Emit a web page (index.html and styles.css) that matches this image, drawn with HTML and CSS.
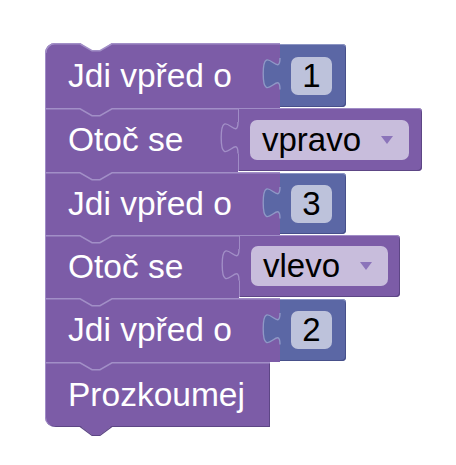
FILE: index.html
```html
<!DOCTYPE html>
<html>
<head>
<meta charset="utf-8">
<link rel="stylesheet" href="styles.css">
</head>
<body>
<div class="stack">
  <div class="row h65">
    <div class="stmt first w-jdi">
      <svg class="edge" height="10"><polygon class="dip" points="35,0 47,8 55,8 67,0"/><path class="hl" d="M0.75,10 A9.25,9.25 0 0 1 10,0.75 L35,0.75 L47,7.75 L55,7.75 L67,0.75 L1000,0.75"/></svg>
      <span class="label">Jdi vpřed o</span>
    </div>
    <div class="value blue">
      <svg class="tab" width="20" height="33"><path class="tab-fill" d="M18,0 C18,21 1.2,-16.8 1.2,15.75 S18,10.5 18,31.5 L20,31.5 L20,0 Z"/><path class="tab-hl" d="M18,0 C18,21 1.2,-16.8 1.2,15.75 S18,10.5 18,31.5"/></svg>
      <span class="field num">1</span>
    </div>
  </div>
  <div class="row h64">
    <div class="stmt w-oto">
      <svg class="edge" height="10"><polyline class="hl" points="0,0.75 35,0.75 47,7.75 55,7.75 67,0.75 1000,0.75"/></svg>
      <span class="label">Otoč se</span>
    </div>
    <div class="value purple w-vpravo">
      <svg class="tab" width="20" height="33"><path class="tab-fill" d="M18,0 C18,21 1.2,-16.8 1.2,15.75 S18,10.5 18,31.5 L20,31.5 L20,0 Z"/><path class="tab-hl" d="M18,0 C18,21 1.2,-16.8 1.2,15.75 S18,10.5 18,31.5"/></svg>
      <span class="field dd">vpravo<i class="arrow"></i></span>
    </div>
  </div>
  <div class="row h63">
    <div class="stmt w-jdi">
      <svg class="edge" height="10"><polyline class="hl" points="0,0.75 35,0.75 47,7.75 55,7.75 67,0.75 1000,0.75"/></svg>
      <span class="label">Jdi vpřed o</span>
    </div>
    <div class="value blue">
      <svg class="tab" width="20" height="33"><path class="tab-fill" d="M18,0 C18,21 1.2,-16.8 1.2,15.75 S18,10.5 18,31.5 L20,31.5 L20,0 Z"/><path class="tab-hl" d="M18,0 C18,21 1.2,-16.8 1.2,15.75 S18,10.5 18,31.5"/></svg>
      <span class="field num">3</span>
    </div>
  </div>
  <div class="row h63">
    <div class="stmt w-oto2">
      <svg class="edge" height="10"><polyline class="hl" points="0,0.75 35,0.75 47,7.75 55,7.75 67,0.75 1000,0.75"/></svg>
      <span class="label">Otoč se</span>
    </div>
    <div class="value purple w-vlevo">
      <svg class="tab" width="20" height="33"><path class="tab-fill" d="M18,0 C18,21 1.2,-16.8 1.2,15.75 S18,10.5 18,31.5 L20,31.5 L20,0 Z"/><path class="tab-hl" d="M18,0 C18,21 1.2,-16.8 1.2,15.75 S18,10.5 18,31.5"/></svg>
      <span class="field dd">vlevo<i class="arrow"></i></span>
    </div>
  </div>
  <div class="row h64">
    <div class="stmt w-jdi">
      <svg class="edge" height="10"><polyline class="hl" points="0,0.75 35,0.75 47,7.75 55,7.75 67,0.75 1000,0.75"/></svg>
      <span class="label">Jdi vpřed o</span>
    </div>
    <div class="value blue">
      <svg class="tab" width="20" height="33"><path class="tab-fill" d="M18,0 C18,21 1.2,-16.8 1.2,15.75 S18,10.5 18,31.5 L20,31.5 L20,0 Z"/><path class="tab-hl" d="M18,0 C18,21 1.2,-16.8 1.2,15.75 S18,10.5 18,31.5"/></svg>
      <span class="field num">2</span>
    </div>
  </div>
  <div class="row h65">
    <div class="stmt last w-proz">
      <svg class="edge" height="10"><polyline class="hl" points="0,0.75 35,0.75 47,7.75 55,7.75 67,0.75 1000,0.75"/></svg>
      <span class="label">Prozkoumej</span>
      <svg class="bottom-tab" width="80" height="11" viewBox="0 0 80 11"><polygon class="bt-fill" points="35,0 47,9 55,9 67,0"/><polyline class="bt-dark" points="35,0.5 47,9.5 55,9.5 67,0.5"/></svg>
    </div>
  </div>
</div>
</body>
</html>
```

FILE: styles.css
```css
html, body {
  margin: 0;
  background: #ffffff;
}

body {
  font-family: "Liberation Sans", Arial, sans-serif;
}

.stack {
  display: flex;
  flex-direction: column;
  padding: 43px 0 20px 45px;
}

.row {
  display: flex;
  align-items: stretch;
}

.h65 { height: 65px; }
.h64 { height: 64px; }
.h63 { height: 63px; }

.stmt {
  position: relative;
  box-sizing: border-box;
  display: flex;
  align-items: center;
  padding-left: 23px;
  background: #7c5ca7;
  box-shadow: inset 1px 0 0 #a08cc6;
}

.w-jdi { width: 235px; }
.w-oto { width: 193px; }
.w-oto2 { width: 194px; }
.w-proz { width: 225px; }

.first {
  border-top-left-radius: 10px;
}

.last {
  border-bottom-left-radius: 10px;
  box-shadow: inset 1px 0 0 #a08cc6, inset -1px -1px 0 #5d4685;
}

.label {
  color: #ffffff;
  font-size: 33.5px;
  white-space: nowrap;
}

.edge {
  position: absolute;
  top: 0;
  left: 0;
  width: 100%;
}

.edge .dip {
  fill: #ffffff;
}

.edge .hl {
  fill: none;
  stroke: #a28fc7;
  stroke-width: 1.5;
}

.bottom-tab {
  display: block;
  position: absolute;
  left: 0;
  bottom: -10px;
  z-index: 2;
  overflow: visible;
}

.bt-fill {
  fill: #7c5ca7;
}

.bt-dark {
  fill: none;
  stroke: #5d4685;
  stroke-width: 1.2;
}

.value {
  position: relative;
  box-sizing: border-box;
  display: flex;
  align-items: center;
  margin: 1px 0;
  border-radius: 0 4px 4px 0;
}

.value.blue {
  width: 66px;
  padding-left: 11px;
  background: #5b67a5;
  box-shadow: inset 0 1px 0 #8c95c3, inset -1px -1px 0 #47508a;
}

.value.purple {
  margin-top: 0;
  padding-left: 12px;
  background: #7c5ca7;
  box-shadow: inset 1px 0 0 #a08cc6, inset 0 1px 0 #a08cc6, inset -1px -1px 0 #5d4685;
}

.w-vpravo { width: 184px; }
.w-vlevo { width: 161px; }

.tab {
  position: absolute;
  left: -18px;
  top: 14px;
  overflow: visible;
}

.blue .tab-fill { fill: #5b67a5; }
.blue .tab-hl { fill: none; stroke: #8f98c6; stroke-width: 1.4; }

.purple .tab-fill { fill: #7c5ca7; }
.purple .tab-hl { fill: none; stroke: #a28fc7; stroke-width: 1.4; }

.field {
  box-sizing: border-box;
  display: flex;
  align-items: center;
  font-size: 33px;
  color: #000000;
  white-space: nowrap;
}

.num {
  width: 41px;
  height: 38px;
  justify-content: center;
  background: #bdc2db;
  border-radius: 7px;
}

.dd {
  height: 40px;
  padding: 0 16px 0 12px;
  gap: 20px;
  background: #c8bddc;
  border-radius: 7px;
}

.arrow {
  width: 0;
  height: 0;
  border-left: 6px solid transparent;
  border-right: 6px solid transparent;
  border-top: 8px solid #8b74ba;
}
```
